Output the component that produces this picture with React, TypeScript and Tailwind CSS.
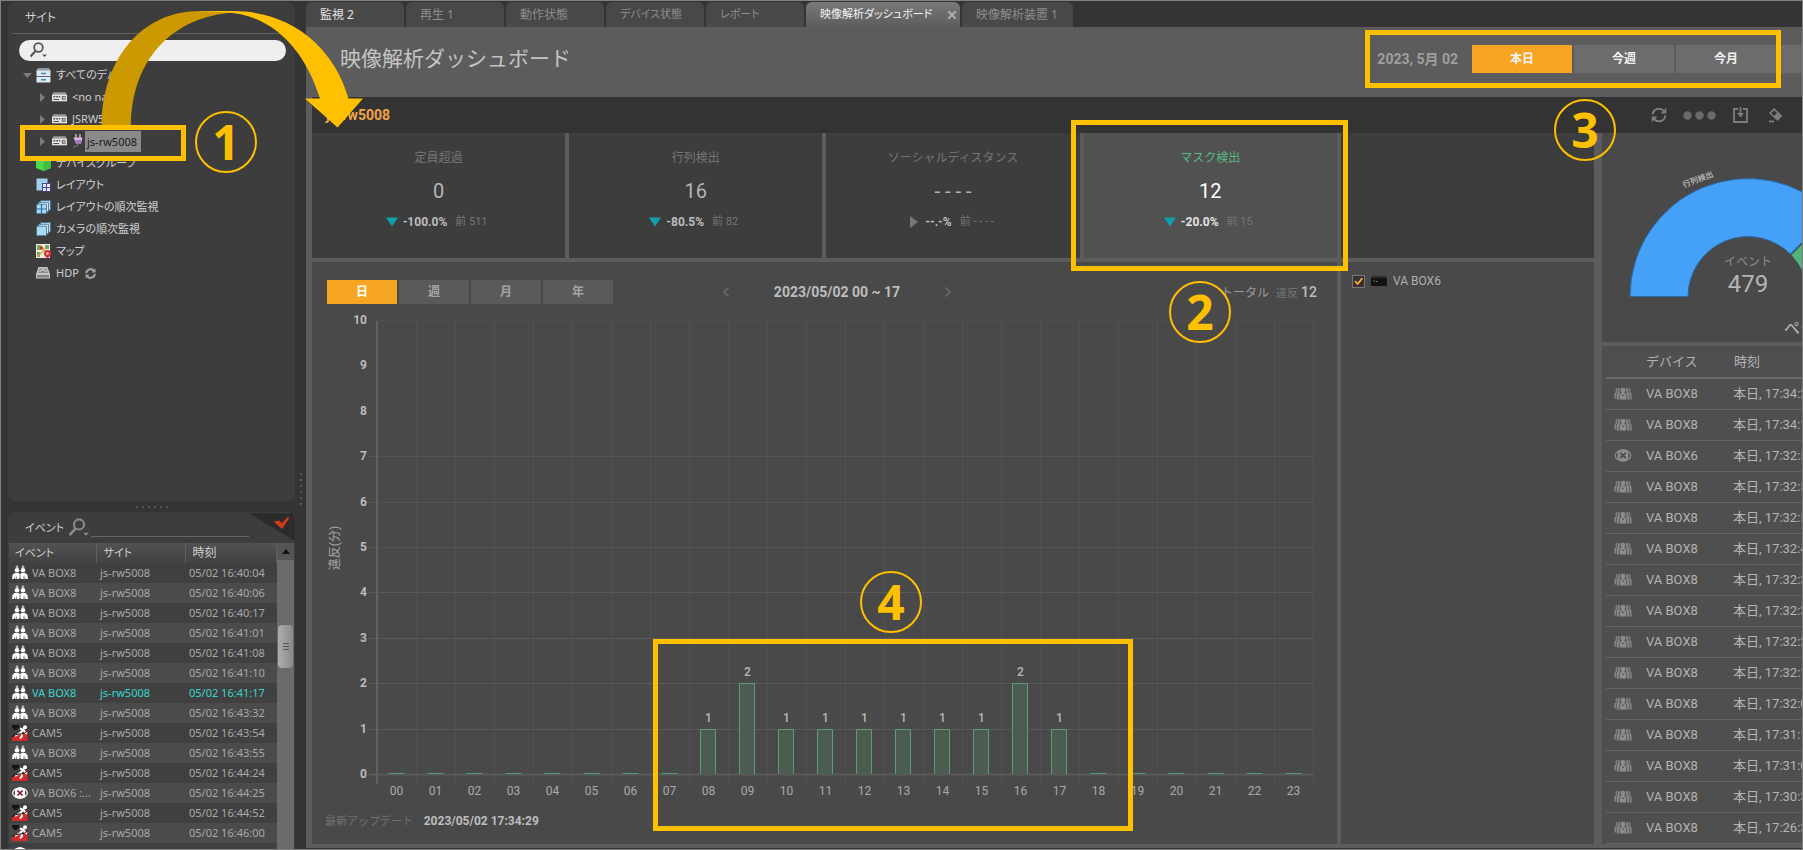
import { useState, type ReactNode } from "react"
import { clsx } from "clsx"
import { ChevronLeft, ChevronRight } from "lucide-react"

const UI_FONT = "font-['Noto_Sans','Noto_Sans_CJK_JP',sans-serif] [font-feature-settings:'palt']"

type EventKind = "people" | "fence" | "mask"

interface StatCard {
  title: string
  value: string
  change: string
  previous: string
  trend: "down" | "none"
}

const tabs = [
  { label: "監視 2", className: "w-[98px] text-xs" },
  { label: "再生 1", className: "w-[98px] text-xs" },
  { label: "動作状態", className: "w-[98px] text-xs" },
  { label: "デバイス状態", className: "w-[98px] text-[11px]" },
  { label: "レポート", className: "w-[98px] text-[11px]" },
  { label: "映像解析ダッシュボード", className: "w-[154px] pr-1 text-[11px]" },
  { label: "映像解析装置 1", className: "w-[111px] text-xs" },
]

const events: { kind: EventKind; name: string; time: string }[] = [
  { kind: "people", name: "VA BOX8", time: "05/02 16:40:04" },
  { kind: "people", name: "VA BOX8", time: "05/02 16:40:06" },
  { kind: "people", name: "VA BOX8", time: "05/02 16:40:17" },
  { kind: "people", name: "VA BOX8", time: "05/02 16:41:01" },
  { kind: "people", name: "VA BOX8", time: "05/02 16:41:08" },
  { kind: "people", name: "VA BOX8", time: "05/02 16:41:10" },
  { kind: "people", name: "VA BOX8", time: "05/02 16:41:17" },
  { kind: "people", name: "VA BOX8", time: "05/02 16:43:32" },
  { kind: "fence", name: "CAM5", time: "05/02 16:43:54" },
  { kind: "people", name: "VA BOX8", time: "05/02 16:43:55" },
  { kind: "fence", name: "CAM5", time: "05/02 16:44:24" },
  { kind: "mask", name: "VA BOX6 :...", time: "05/02 16:44:25" },
  { kind: "fence", name: "CAM5", time: "05/02 16:44:52" },
  { kind: "fence", name: "CAM5", time: "05/02 16:46:00" },
  { kind: "mask", name: "VA BOX6 :...", time: "05/02 16:47:50" },
]

const cards: StatCard[] = [
  { title: "定員超過", value: "0", change: "-100.0%", previous: "511", trend: "down" },
  { title: "行列検出", value: "16", change: "-80.5%", previous: "82", trend: "down" },
  { title: "ソーシャルディスタンス", value: "- - - -", change: "--.-%", previous: "- - - -", trend: "none" },
  { title: "マスク検出", value: "12", change: "-20.0%", previous: "15", trend: "down" },
]

const hourly = [0, 0, 0, 0, 0, 0, 0, 0, 1, 2, 1, 1, 1, 1, 1, 1, 2, 1, 0, 0, 0, 0, 0, 0]

const recent = [
  "17:34:22", "17:34:11", "17:32:58", "17:32:55", "17:32:51", "17:32:45", "17:32:38", "17:32:32",
  "17:32:24", "17:32:17", "17:32:05", "17:31:16", "17:31:02", "17:30:35", "17:26:34",
]

function PeopleIcon() {
  return (
    <svg width="16" height="16" viewBox="0 0 16 16" fill="#fff">
      <circle cx="5" cy="2" r="1.4" fill="#bbb" />
      <circle cx="11" cy="2" r="1.4" fill="#bbb" />
      <circle cx="5" cy="5.3" r="2.3" />
      <circle cx="11" cy="5.3" r="2.3" />
      <path d="M.5 10 2.500 8h4L8 9.200 9.500 8h4l2 2 .5 4h-1.800l-.7-2v2H9L8 12l-1 2H3l-.5-2-.5 2H0z" />
      <path d="M8 9.500V12M12 11v3M4.300 11.500v2.500" stroke="#444" strokeWidth=".7" />
    </svg>
  )
}

function FenceIcon() {
  return (
    <svg width="16" height="16" viewBox="0 0 16 16">
      <path d="M0 0h7v3H5.500v2h-4V3H0z" fill="#151515" />
      <path d="M0 12.500 5 10l5-1.500 5.500-4V16H0z" fill="#d42b2b" />
      <circle cx="13" cy="2.300" r="2" fill="#fff" />
      <path d="m12 4-4 4-5 3M8 3.500l3.500 1 1.500 3 2 1M9 7.500l1 3.500-2 2.500" stroke="#fff" strokeWidth="2" fill="none" />
      <path d="M0 11.500 4 9.500l8-1 3.500-2.500" stroke="#151515" strokeWidth="1" fill="none" />
    </svg>
  )
}

function MaskIcon({ muted = false }: { muted?: boolean }) {
  const fill = muted ? "#8c8c8c" : "#fff"
  return (
    <svg width={muted ? 18 : 16} height={muted ? 15 : 16} viewBox="0 0 16 14">
      <ellipse cx="8" cy="7" rx="7.300" ry="5" fill="none" stroke={fill} strokeWidth="1.200" />
      <path d="M3 3c3-2.300 7-2.300 10 0v8c-3 2.300-7 2.300-10 0z" fill={fill} />
      <path d="m5.500 4.500 5 5m0-5-5 5" stroke={muted ? "#4d4d4d" : "#8d1626"} strokeWidth="1.700" />
    </svg>
  )
}

// Five figures, front one last so that it covers its neighbours
function CrowdIcon() {
  return (
    <svg width="18" height="13" viewBox="0 0 18 13" fill="#8c8c8c" stroke="#4f4f4f" strokeWidth=".9">
      <path d="M3 .5a2.200 2.200 0 0 0-1 4C.500 5.200 0 6.500 0 8v4h4V2zM15 .5a2.200 2.200 0 0 1 1 4c1.500.700 2 2 2 3.500v5h-4V2z" />
      <path d="M5.500.3a2.400 2.400 0 0 0-1.300 4.400C2.800 5.500 2.300 6.500 2.300 8.500V13h4V2zM12.500.3a2.400 2.400 0 0 1 1.300 4.400c1.400.800 1.900 1.800 1.900 3.800V13h-4V2z" />
      <path d="M5.200 13V8.800c0-2 1-2.800 2.200-3.200a2.900 2.900 0 1 1 3.200 0c1.200.400 2.200 1.200 2.200 3.200V13z" />
      <path d="m8.200 7.500.8 1.500.8-1.500" fill="none" />
    </svg>
  )
}

function EventIcon({ kind }: { kind: EventKind }) {
  if (kind === "people") return <PeopleIcon />
  if (kind === "fence") return <FenceIcon />
  return <MaskIcon />
}

function RecorderIcon() {
  return (
    <svg width="15" height="10" viewBox="0 0 16 10">
      <path d="M1.500 0h13L16 3v6.500H0V3z" fill="#999" />
      <path d="M0 2.500h16v7H0z" fill="#e4e4e4" />
      <path d="M1.500 4h2v1.500h-2zM4.500 4h2v1.500h-2zM7.500 4h1.300v1.500H7.500zM1.500 7h6v1.300h-6z" fill="#555" />
      <rect x="10.500" y="4" width="4" height="4" fill="#666" />
      <rect x="12" y="5.200" width="1.500" height="1.600" fill="#fff" />
    </svg>
  )
}

function ServerIcon() {
  return (
    <svg width="15" height="15" viewBox="0 0 15 15">
      <path d="M2 0h11l2 3H0z" fill="#8b9aa6" />
      <path d="M.5 2.500h14V8H.5zM.5 9h14v5.500H.5z" fill="#dfe9ef" />
      <path d="M0 8h15v1H0z" fill="#5b6a75" />
      <path d="M5 4.800h5v1.400H5zM5 11h5v1.400H5z" fill="#3f8fae" />
    </svg>
  )
}

function CubeIcon() {
  return (
    <svg width="15" height="15" viewBox="0 0 15 15">
      <path d="M7.500 0 15 3v9l-7.500 3L0 12V3z" fill="#4fd74f" />
      <path d="M7.500 5.500 15 3v9l-7.500 3z" fill="#3fc043" />
      <path d="M7.500 0 15 3 7.500 5.500 0 3z" fill="#96ef8e" />
    </svg>
  )
}

function LayoutIcon() {
  return (
    <svg width="15" height="14" viewBox="0 0 15 14">
      <path d="M.5.500h11v12H.5z" fill="#9fd0ee" />
      <path d="M6 5h8.500v8.500H6z" fill="#4b4d9c" />
      <path d="M7 6h3v3H7zM11 6h3v3h-3zM7 10h3v3H7zM11 10h3v3h-3z" fill="#e5e6ff" />
    </svg>
  )
}

function StackIcon({ split = false }: { split?: boolean }) {
  return (
    <svg width="15" height="14" viewBox="0 0 15 14">
      <path d="M4.500.500h10v9.500h-10z" fill="#bfe0f2" stroke="#3c6f90" strokeWidth=".8" />
      <path d="M2.500 2.300h10v9.500h-10z" fill="#cfe9f7" stroke="#3c6f90" strokeWidth=".8" />
      <path d="M.500 4.200h10v9.500h-10z" fill="#a9d9f3" stroke="#3c6f90" strokeWidth=".8" />
      {split ? <path d="M5.500 4v10M0 9h11" stroke="#2d6fa0" strokeWidth="1.200" /> : null}
    </svg>
  )
}

function MapIcon() {
  return (
    <svg width="16" height="15" viewBox="0 0 16 15">
      <path d="M0 0h14v14H0z" fill="#f4f0e4" />
      <path d="M1 1h4v5H1zM9 1h4v4H9zM1 8h3v5H1z" fill="#71a95c" />
      <path d="M1 13 9 5M4 1l6 7" stroke="#d9a53d" strokeWidth="1.200" />
      <circle cx="5.500" cy="4" r="1.700" fill="#d03434" />
      <circle cx="11.500" cy="9.500" r="3.500" fill="#d03434" />
      <circle cx="11.500" cy="9.500" r="1.200" fill="#f4d6d6" />
      <path d="m9.500 12 2 3 2-3z" fill="#d03434" />
    </svg>
  )
}

function DriveIcon() {
  return (
    <svg width="14" height="12" viewBox="0 0 14 12">
      <path d="M2.500 0h9L14 7v4.500H0V7z" fill="#c4c4c4" />
      <path d="M3.500 1.500h7l1.300 4.500H2.200z" fill="#8d8d8d" />
      <path d="M4 5c0-3 6-3 6 0" fill="none" stroke="#ddd" />
      <path d="M1 8h12v2.500H1z" fill="#808080" />
    </svg>
  )
}

function PlugIcon() {
  return (
    <svg width="11" height="15" viewBox="0 0 11 15">
      <path d="M4 0v4M8 0v4" stroke="#cfc4d4" strokeWidth="1.300" />
      <path d="M1.500 3.500h9l-1.500 6H4z" fill="#dcb7e6" />
      <path d="M2.500 6h7l-1 3.500H4z" fill="#a676b8" />
      <path d="M6.300 9.500c0 4-3.300 1.500-5.300 4.500" fill="none" stroke="#7c6486" strokeWidth="1.200" />
    </svg>
  )
}

function SyncIcon({ size = 16, color = "#7d7d7d", weight = 2 }: { size?: number; color?: string; weight?: number }) {
  return (
    <svg width={size} height={size} viewBox="0 0 16 16" fill="none" stroke={color} strokeWidth={weight}>
      <path d="M1.700 7.500A6.300 6.300 0 0 1 12.800 4M14.300 8.500A6.300 6.300 0 0 1 3.200 12" />
      <path d="M15.300.800v5.700H9.600zM.700 15.200V9.500h5.700z" fill={color} stroke="none" />
    </svg>
  )
}

function SearchGlyph({ color, size = 17 }: { color: string; size?: number }) {
  return (
    <svg width={size} height={size} viewBox="0 0 17 17" fill="none" stroke={color}>
      <circle cx="8.500" cy="5.500" r="4.300" strokeWidth="1.800" />
      <path d="m5.500 9-5 5.500" strokeWidth="2.200" />
      <path d="M12 12.500h5L14.500 15z" fill={color} stroke="none" />
    </svg>
  )
}

function TreeRow({ icon, label, arrow, child }: { icon: ReactNode; label: ReactNode; arrow?: "open" | "closed"; child?: boolean }) {
  return (
    <li className={clsx("flex h-[22px] items-center", child ? "pl-7" : "pl-[11px]")}>
      <span className={clsx("flex shrink-0", child ? "w-3" : "w-[13px]")}>
        {arrow ? (
          <svg width="9" height="9" viewBox="0 0 9 9" fill="#7c7c7c">
            {arrow === "open" ? <path d="M0 2h9L4.500 7z" /> : <path d="M0 0v9l5-4.500z" />}
          </svg>
        ) : null}
      </span>
      <span className="flex w-5 shrink-0">{icon}</span>
      {label}
    </li>
  )
}

function SitePanel() {
  return (
    <section className="h-[499px] shrink-0 rounded-lg bg-[#3d3d3d] px-1 text-[#d0d0d0]">
      <h2 className="h-8 border-b border-[#606060] pl-[13px] text-xs leading-8">サイト</h2>
      <label className="mr-[5px] ml-[7px] mt-[6px] flex h-[21px] items-center rounded-full bg-[#eee] pl-[11px]">
        <SearchGlyph color="#555" />
        <input aria-label="サイト検索" className="ml-1 min-w-0 flex-1 bg-transparent text-[11px] text-black outline-none" />
      </label>
      <ul className="mt-[3px] text-[11px]">
        <TreeRow arrow="open" icon={<ServerIcon />} label="すべてのデバイス" />
        <TreeRow child arrow="closed" icon={<RecorderIcon />} label="<no name>" />
        <TreeRow child arrow="closed" icon={<RecorderIcon />} label="JSRW5008" />
        <TreeRow
          child
          arrow="closed"
          icon={<RecorderIcon />}
          label={
            <>
              <PlugIcon />
              <span className="ml-0.5 h-[21px] w-14 bg-[#8a8a8a] px-0.5 leading-[21px] whitespace-nowrap text-[#1b1b1b]">js-rw5008</span>
            </>
          }
        />
        <TreeRow icon={<CubeIcon />} label="デバイスグループ" />
        <TreeRow icon={<LayoutIcon />} label="レイアウト" />
        <TreeRow icon={<StackIcon split />} label="レイアウトの順次監視" />
        <TreeRow icon={<StackIcon />} label="カメラの順次監視" />
        <TreeRow icon={<MapIcon />} label="マップ" />
        <TreeRow
          icon={<DriveIcon />}
          label={
            <>
              <span className="mr-1.5">HDP</span>
              <SyncIcon size={11} color="#a2a2a2" weight={3} />
            </>
          }
        />
      </ul>
    </section>
  )
}

function EventPanel() {
  return (
    <section className="flex min-h-0 flex-1 flex-col overflow-hidden rounded-t-lg bg-[#3d3d3d] text-[#d0d0d0]">
      <div className="flex h-[31px] shrink-0 justify-between pl-[17px]">
        <h2 className="w-12 pt-2 text-[11px]">イベント</h2>
        <div className="flex flex-1 items-start pt-[6px]">
          <SearchGlyph color="#8a8a8a" size={20} />
          <input aria-label="イベント検索" className="ml-0.5 h-[19px] min-w-0 flex-1 border-b border-[#666] bg-transparent text-[11px] outline-none" />
        </div>
        <svg width="50" height="30" viewBox="0 0 50 30">
          <path d="M0 0h50v30z" fill="#2b2b2b" />
          <path d="m27 9 6-1 2.500 3L42 4l2 1-8 12.500z" fill="#cf3d17" />
        </svg>
      </div>
      <div className="flex min-h-0 flex-1 pr-px pl-px">
        <div className="min-w-0 flex-1 overflow-hidden">
          <table className="w-full table-fixed text-left text-[11px]">
            <thead>
              <tr className="h-5 bg-gradient-to-b from-[#525252] to-[#414141]">
                <th className="w-[87px] border-r border-[#606060] pl-1.5 font-normal">イベント</th>
                <th className="w-[89px] border-r border-[#606060] pl-[7px] font-normal">サイト</th>
                <th className="border-r border-[#606060] pl-[7px] text-xs font-normal">時刻</th>
              </tr>
            </thead>
            <tbody>
              {events.map((event, i) => (
                <tr
                  key={event.time}
                  className={clsx(
                    "h-5 whitespace-nowrap",
                    i % 2 ? "bg-[#4b4b4b]" : "bg-[#404040]",
                    i === 6 ? "text-[#35d6cd]" : "text-[#a9a9a9]",
                  )}
                >
                  <td className="p-0">
                    <span className="flex items-center gap-1 pl-[3px]">
                      <EventIcon kind={event.kind} />
                      {event.name}
                    </span>
                  </td>
                  <td className="p-0 pl-1">js-rw5008</td>
                  <td className="p-0 pl-1">{event.time}</td>
                </tr>
              ))}
            </tbody>
          </table>
        </div>
        <div className="flex w-[17px] flex-col bg-[#6a6a6a]">
          <button aria-label="上へ" className="flex h-[17px] items-center justify-center bg-[#555]">
            <svg width="8" height="5" viewBox="0 0 8 5">
              <path d="M0 5h8L4 0z" fill="#111" />
            </svg>
          </button>
          <div className="mx-px mt-[65px] flex h-[43px] flex-col items-center justify-center gap-0.5 rounded-sm bg-gradient-to-r from-[#adadad] to-[#8a8a8a]">
            <i className="h-px w-1.5 bg-[#555]" />
            <i className="h-px w-1.5 bg-[#555]" />
            <i className="h-px w-1.5 bg-[#555]" />
          </div>
        </div>
      </div>
    </section>
  )
}

function TabBar() {
  const [active, setActive] = useState(5)

  return (
    <nav className={clsx("flex h-[26px] shrink-0 gap-0.5 bg-[#343434] pt-px", UI_FONT)}>
      {tabs.map((tab, i) => (
        <button
          key={tab.label}
          onClick={() => setActive(i)}
          className={clsx(
            "flex items-center justify-between rounded-t-md pl-[14px] whitespace-nowrap",
            tab.className,
            i === active ? "bg-gradient-to-b from-[#7a7a7a] to-[#5c5c5c] text-[#f4f4f4]" : "bg-[#484848]",
            i !== active && (i === 0 ? "text-[#e6e6e6]" : "text-[#8d8d8d]"),
          )}
        >
          {tab.label}
          {i === 5 ? (
            <svg width="8" height="8" viewBox="0 0 8 8" stroke="#adadad" strokeWidth="2">
              <path d="m0 0 8 8M8 0 0 8" />
            </svg>
          ) : null}
        </button>
      ))}
    </nav>
  )
}

function PeriodHeader() {
  const [period, setPeriod] = useState("本日")

  return (
    <header className="flex h-[70px] shrink-0 items-center justify-between overflow-hidden bg-[#5c5c5c] pl-[34px]">
      <h1 className="pb-1 text-[21px] text-[#c4c4c4]">映像解析ダッシュボード</h1>
      <div className="flex items-center pb-[6px]">
        <span className="mr-[14px] text-sm font-bold text-[#9f9f9f]">2023, 5月 02</span>
        <div className="flex w-[330px] gap-0.5 overflow-hidden">
          {["本日", "今週", "今月", "指定"].map((label) => (
            <button
              key={label}
              onClick={() => setPeriod(label)}
              className={clsx(
                "h-7 w-[100px] shrink-0 text-xs font-bold text-[#f2f2f2]",
                label === period ? "bg-[#f7a623]" : "bg-[#6c6c6c]",
              )}
            >
              {label}
            </button>
          ))}
        </div>
      </div>
    </header>
  )
}

function Toolbar() {
  return (
    <div className="flex h-9 shrink-0 items-center justify-between bg-[#333] pr-[19px] pl-[14px]">
      <strong className="text-sm text-[#f2a445]">js-rw5008</strong>
      <div className="flex items-center">
        <button aria-label="更新" className="mr-4"><SyncIcon /></button>
        <button aria-label="メニュー" className="mr-[17px]">
          <svg width="33" height="9" viewBox="0 0 33 9" fill="#6a6a6a">
            <circle cx="4.500" cy="4.500" r="4.200" />
            <circle cx="16.500" cy="4.500" r="4.200" />
            <circle cx="28.500" cy="4.500" r="4.200" />
          </svg>
        </button>
        <button aria-label="保存" className="mr-5">
          <svg width="15" height="16" viewBox="0 0 15 16" fill="none" stroke="#7d7d7d" strokeWidth="1.800">
            <path d="M5 2H1v13h13V2h-4" />
            <path d="M7.500 0v8" />
            <path d="M4 6h7l-3.500 4.500z" fill="#7d7d7d" stroke="none" />
          </svg>
        </button>
        <button aria-label="消去">
          <svg width="15" height="16" viewBox="0 0 15 16">
            <path d="m6 1 8.500 8-5 5L1 6z" fill="#7d7d7d" />
            <path d="M6 3.200 9 6 6 9 3.200 6.200z" fill="#333" />
            <path d="M1 14.500h5" stroke="#7d7d7d" strokeWidth="1.800" />
          </svg>
        </button>
      </div>
    </div>
  )
}

function StatCards() {
  const [selected, setSelected] = useState(3)

  return (
    <div className="grid h-[125px] shrink-0 grid-cols-5 gap-1">
      {cards.map((card, i) => (
        <button
          key={card.title}
          onClick={() => setSelected(i)}
          className={clsx("flex flex-col items-center pt-4", i === selected ? "bg-[#515151]" : "bg-[#3d3d3d]")}
        >
          <span className={clsx("text-xs leading-[18px]", i === selected ? "text-[#56b981]" : "text-[#757575]")}>{card.title}</span>
          <span className={clsx("mt-3 text-xl leading-6", i === selected ? "text-white" : "text-[#b5b5b5]")}>{card.value}</span>
          <span className="mt-2.5 flex items-center leading-[18px]">
            <svg width="12" height="12" viewBox="0 0 12 12" className="mr-[5px]">
              {card.trend === "down" ? <path d="M0 1.500h12L6 10.500z" fill="#109fac" /> : <path d="M2 0v12l8-6z" fill="#777" />}
            </svg>
            <b className={clsx("mr-2 text-xs", i === selected ? "text-[#e4e4e4]" : "text-[#bdbdbd]")}>{card.change}</b>
            <span className="pr-1 text-[11px] text-[#757575]">前 {card.previous}</span>
          </span>
        </button>
      ))}
      <div className="bg-[#3d3d3d]" />
    </div>
  )
}

// Plot area: x 65..1001 (39 per hour), y 17..471 (45.4 per unit)
function HourlyChart() {
  const yOf = (v: number) => Math.round(471 - v * 45.4)

  return (
    <svg viewBox="0 0 1025 500" className="block w-full" role="img" aria-label="違反(分)">
      {Array.from({ length: 24 }, (_, i) => (
        <path key={i} d={`M${65.5 + (i + 1) * 39} 17V480`} stroke="#505050" />
      ))}
      {Array.from({ length: 11 }, (_, v) => (
        <g key={v}>
          <path d={`M57 ${yOf(v) - 0.5}H1001`} stroke={v > 7 ? "#4e4e4e" : v > 4 ? "#545454" : "#5a5a5a"} strokeWidth={v ? 1 : 2} />
          <text x="55" y={yOf(v) + 3} textAnchor="end" fontSize="12" fontWeight="700" fill="#bcbcbc">{v}</text>
        </g>
      ))}
      <path d="M65 17V480" stroke="#616161" strokeWidth="2" />
      {hourly.map((v, i) => {
        const x = 76.5 + i * 39
        return (
          <g key={i}>
            {v ? (
              <>
                <path d={`M${x} 470V${yOf(v) - 0.5}h15V470`} fill="#4c5c51" stroke="#5b9c79" />
                <text x={x + 8} y={yOf(v) - 8} textAnchor="middle" fontSize="12" fontWeight="500" fill="#b9b9b9">{v}</text>
              </>
            ) : (
              <path d={`M${x} 469.500h16`} stroke="#529a75" />
            )}
            <text x={x + 8} y="491" textAnchor="middle" fontSize="12" fill="#a9a9a9">{String(i).padStart(2, "0")}</text>
          </g>
        )
      })}
      <text transform="translate(27 244) rotate(-90)" textAnchor="middle" fontSize="12" fill="#a5a5a5">違反(分)</text>
    </svg>
  )
}

function ChartPanel() {
  const [unit, setUnit] = useState("日")

  return (
    <section className="bg-[#494949] pt-[18px]">
      <div className="grid grid-cols-[1fr_auto_1fr] items-center pr-5 pl-[15px]">
        <div className="flex gap-0.5">
          {["日", "週", "月", "年"].map((label) => (
            <button
              key={label}
              onClick={() => setUnit(label)}
              className={clsx("h-6 w-[70px] text-xs font-bold", label === unit ? "bg-[#f7a623] text-white" : "bg-[#5a5a5a] text-[#a4a4a4]")}
            >
              {label}
            </button>
          ))}
        </div>
        <div className="flex items-center gap-10 pl-[30px] text-[#636363]">
          <button aria-label="前へ"><ChevronLeft size={16} strokeWidth={3} /></button>
          <b className="text-sm leading-6 text-[#bdbdbd]">2023/05/02 00 ~ 17</b>
          <button aria-label="次へ"><ChevronRight size={16} strokeWidth={3} /></button>
        </div>
        <p className="text-right text-xs text-[#9a9a9a]">
          トータル <span className="ml-1 text-[11px] text-[#777]">違反</span> <span className="text-sm font-medium text-[#bdbdbd]">12</span>
        </p>
      </div>
      <HourlyChart />
      <p className="pt-[9px] pl-[13px] text-[11px] leading-[18px] text-[#707070]">
        最新アップデート <b className="ml-2 text-xs text-[#bdbdbd]">2023/05/02 17:34:29</b>
      </p>
    </section>
  )
}

function DevicePanel() {
  return (
    <section className="bg-[#494949] pt-2.5 pl-[11px]">
      <label className="flex items-center text-xs leading-[18px] text-[#b0b0b0]">
        <input type="checkbox" defaultChecked className="peer sr-only" />
        <svg width="13" height="13" viewBox="0 0 13 13" className="mr-1.5 border border-[#777] bg-[#3a3030]">
          <path d="m2.500 6 3 3.500L11 2.500" fill="none" stroke="#f7b23c" strokeWidth="2" />
        </svg>
        <svg width="16" height="10" viewBox="0 0 16 10" className="mr-1.5">
          <path d="M0 1h16v9H0z" fill="#131313" />
          <path d="M1 0h14l1 2H0z" fill="#2d2d2d" />
          <path d="M2.500 5h1.500M5 5.500h1.500" stroke="#888" />
        </svg>
        VA BOX6
      </label>
    </section>
  )
}

function SummaryPanel() {
  return (
    <aside className="flex w-[200px] shrink-0 flex-col gap-1 overflow-hidden">
      <section className="h-[209px] w-[292px] shrink-0 bg-[#494949]">
        <svg width="292" height="209" viewBox="0 0 292 209" role="img" aria-label="イベント 479">
          <path d="M28 163.500A118 118 0 0 1 229.400 80.100L188.400 121.100A60 60 0 0 0 86 163.500z" fill="#45a1f7" stroke="#2b6aa6" />
          <path d="M230.400 81.100A118 118 0 0 1 264 163.500H206A60 60 0 0 0 189.400 122.100z" fill="#50b37c" />
          <text transform="translate(97 49) rotate(-21)" textAnchor="middle" fontSize="8" fontWeight="700" fill="#b0b0b0">行列検出</text>
          <text x="146" y="133" textAnchor="middle" fontSize="12" fill="#8e8e8e">イベント</text>
          <text x="146" y="159" textAnchor="middle" fontSize="24" fill="#b5b5b5">479</text>
          <text x="182" y="201" fontSize="16" fill="#bdbdbd">ページ</text>
        </svg>
      </section>
      <section className="w-[292px] flex-1 bg-[#4f4f4f] pl-1 text-[#b4b4b4]">
        <table className="w-full table-fixed border-collapse text-left text-[13px]">
          <thead>
            <tr className="h-8 border-b-2 border-[#6c6c6c]">
              <th className="w-10" aria-label="種類" />
              <th className="w-[87px] font-normal">デバイス</th>
              <th className="pl-px font-normal">時刻</th>
            </tr>
          </thead>
          <tbody>
            {recent.map((time, i) => (
              <tr key={time} className="h-[31px] border-b border-[#656565] whitespace-nowrap">
                <td className="pl-2">{i === 2 ? <MaskIcon muted /> : <CrowdIcon />}</td>
                <td>{i === 2 ? "VA BOX6" : "VA BOX8"}</td>
                <td>本日, {time}</td>
              </tr>
            ))}
          </tbody>
        </table>
      </section>
    </aside>
  )
}

function Grip({ vertical = false, className }: { vertical?: boolean; className: string }) {
  return (
    <div className={clsx("flex items-center justify-center gap-1", vertical && "flex-col", className)}>
      {Array.from({ length: 6 }, (_, i) => (
        <i key={i} className="size-0.5 shrink-0 bg-[#555]" />
      ))}
    </div>
  )
}

function StepBadge({ step, className }: { step: number; className: string }) {
  return (
    <div
      className={clsx(
        "absolute flex size-[62px] items-center justify-center rounded-full border-2 border-[#ffc000] font-['Noto_Sans',sans-serif] text-5xl font-bold text-[#ffc000]",
        className,
      )}
    >
      {step}
    </div>
  )
}

function Guides() {
  return (
    <div className="pointer-events-none absolute inset-0 overflow-hidden">
      <svg width="370" height="130" viewBox="0 0 370 130" className="absolute top-0 left-0">
        <path d="M100.500 126C101 56 142 10 199 10H240L227 12C170 18 130 60 130 126z" fill="#cc9a00" />
        <path d="M199 10H232C290 10 333 46 347.500 97.500H362L336.500 126.500 304 97.500H319C303 46 270 14 226 11.500z" fill="#ffc000" />
      </svg>
      <div className="absolute top-[124px] left-[19px] h-9 w-[166px] border-5 border-[#ffc000]" />
      <div className="absolute top-[119px] left-[1070px] h-[151px] w-[277px] border-5 border-[#ffc000]" />
      <div className="absolute top-[29px] left-[1364px] h-[58px] w-[416px] border-5 border-[#ffc000]" />
      <div className="absolute top-[638px] left-[652px] h-48 w-[480px] border-5 border-[#ffc000]" />
      <StepBadge step={1} className="top-[110px] left-[194px]" />
      <StepBadge step={2} className="top-[280px] left-[1168px]" />
      <StepBadge step={3} className="top-[98px] left-[1553px]" />
      <StepBadge step={4} className="top-[570px] left-[859px]" />
    </div>
  )
}

export default function App() {
  return (
    <div className="relative flex h-screen overflow-hidden border border-[#7f7f7f] bg-[#343434] font-['Roboto','Noto_Sans_CJK_JP',sans-serif]">
      <div className={clsx("flex w-[294px] shrink-0 flex-col pt-px pl-[7px]", UI_FONT)}>
        <SitePanel />
        <Grip className="h-[11px] shrink-0" />
        <EventPanel />
      </div>
      <Grip vertical className="w-[11px] shrink-0 pt-[128px]" />
      <main className="flex min-w-0 flex-1 flex-col">
        <TabBar />
        <PeriodHeader />
        <div className="flex min-h-0 flex-1 flex-col border-b border-[#333] bg-[#5c5c5c] pb-1 pl-1.5">
          <Toolbar />
          <div className="flex min-h-0 flex-1">
            <div className="flex min-w-0 flex-1 flex-col gap-1">
              <StatCards />
              <div className="grid min-h-0 flex-1 grid-cols-[1fr_253px] gap-1">
                <ChartPanel />
                <DevicePanel />
              </div>
            </div>
            <Grip vertical className="w-2 shrink-0" />
            <SummaryPanel />
          </div>
        </div>
      </main>
      <Guides />
    </div>
  )
}
